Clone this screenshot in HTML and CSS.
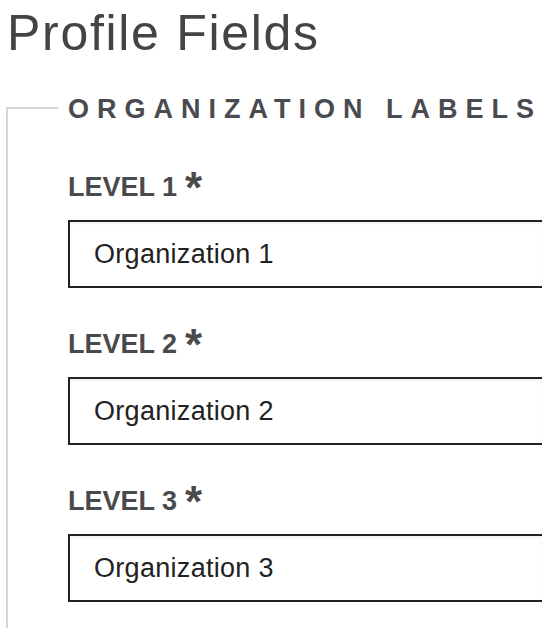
FILE: index.html
```html
<!DOCTYPE html>
<html lang="en">
  <head>
    <meta charset="UTF-8" />
    <meta name="viewport" content="width=device-width, initial-scale=1.0" />
    <title>Profile Fields</title>
    <link rel="stylesheet" href="styles.css">
  </head>
  <body>
    <h1>Profile Fields</h1>

    <fieldset class="org-labels">
      <legend>Organization Labels</legend>

      <label class="field">
        <span class="field-name">Level 1<span class="req">*</span></span>
        <input type="text" value="Organization 1" />
      </label>

      <label class="field">
        <span class="field-name">Level 2<span class="req">*</span></span>
        <input type="text" value="Organization 2" />
      </label>

      <label class="field">
        <span class="field-name">Level 3<span class="req">*</span></span>
        <input type="text" value="Organization 3" />
      </label>
    </fieldset>
  </body>
</html>
```

FILE: styles.css
```css
*,
*::before,
*::after {
  box-sizing: border-box;
  margin: 0;
  padding: 0;
  font-family: "Liberation Sans", Arial, Helvetica, sans-serif;
}
html,
body {
  overflow: hidden;
}
body {
  background: #fff;
  color: #48484c;
}
h1 {
  font-size: 50px;
  font-weight: 400;
  line-height: 55px;
  letter-spacing: 1.7px;
  padding: 6px 7px 0;
  color: #444;
}

/* the box runs off the page in the design: no right or bottom edge */
.org-labels {
  margin: 29px 0 0 6px;
  border: 2px solid #d3d6d9;
  border-right: 0;
  border-bottom: 0;
  padding: 47px 0 26px 60px;
  display: flex;
  flex-direction: column;
  gap: 41px;
}
.org-labels legend {
  margin-left: -10px;
  padding: 4px 0 0 10px;
  font-size: 27px;
  font-weight: 700;
  line-height: 31px;
  letter-spacing: 8px;
  white-space: nowrap;
  text-transform: uppercase;
  color: #4a4b50;
}

.field {
  display: flex;
  flex-direction: column;
  gap: 17px;
}
.field-name {
  font-size: 27px;
  font-weight: 700;
  line-height: 31px;
  text-transform: uppercase;
  color: #4a4a4a;
}
.req {
  font-size: 44px;
  font-weight: 700;
  line-height: 0;
  margin-left: 8px;
  vertical-align: -7px;
}
.field input {
  width: 100%;
  height: 68px;
  padding: 0 24px;
  border: 2px solid #222;
  border-right: 0;
  border-radius: 0;
  box-shadow: inset 0 2px 3px rgba(0, 0, 0, 0.05);
  font-size: 27px;
  letter-spacing: 0.3px;
  color: #222;
  background: #fff;
  outline: none;
}
```
